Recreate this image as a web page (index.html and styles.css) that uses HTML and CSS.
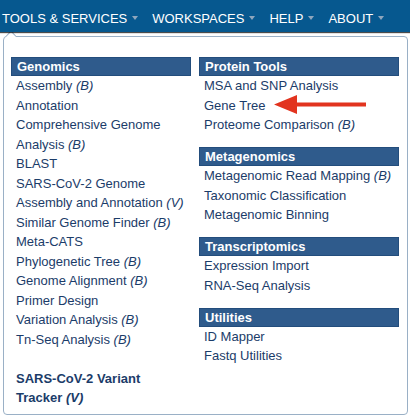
FILE: index.html
```html
<!DOCTYPE html>
<html lang="en">
<head>
    <meta charset="UTF-8">
    <meta name="viewport" content="width=device-width, initial-scale=1.0">
    <title>Tools &amp; Services</title>
    <link rel="stylesheet" href="styles.css">
</head>
<body>
    <nav class="topnav">
        <span class="nav-item">TOOLS &amp; SERVICES<i class="caret"></i></span>
        <span class="nav-item">WORKSPACES<i class="caret"></i></span>
        <span class="nav-item">HELP<i class="caret"></i></span>
        <span class="nav-item">ABOUT<i class="caret"></i></span>
    </nav>

    <div class="dropdown">
        <div class="col">
            <div class="group">
                <div class="group-title">Genomics</div>
                <ul>
                    <li>Assembly <em>(B)</em></li>
                    <li>Annotation</li>
                    <li>Comprehensive Genome</li>
                    <li>Analysis <em>(B)</em></li>
                    <li>BLAST</li>
                    <li>SARS-CoV-2 Genome</li>
                    <li>Assembly and Annotation <em>(V)</em></li>
                    <li>Similar Genome Finder <em>(B)</em></li>
                    <li>Meta-CATS</li>
                    <li>Phylogenetic Tree <em>(B)</em></li>
                    <li>Genome Alignment <em>(B)</em></li>
                    <li>Primer Design</li>
                    <li>Variation Analysis <em>(B)</em></li>
                    <li>Tn-Seq Analysis <em>(B)</em></li>
                    <li class="spacer"></li>
                    <li class="strong">SARS-CoV-2 Variant</li>
                    <li class="strong">Tracker <em>(V)</em></li>
                </ul>
            </div>
        </div>
        <div class="col">
            <div class="group">
                <div class="group-title">Protein Tools</div>
                <ul>
                    <li>MSA and SNP Analysis</li>
                    <li class="pointed">Gene Tree
                        <svg class="arrow" viewBox="0 0 96 24" width="96" height="24">
                            <polygon points="2,11.5 25,2 25,9.5 94,9.5 94,13.5 25,13.5 25,21" fill="#e2341f"/>
                        </svg>
                    </li>
                    <li>Proteome Comparison <em>(B)</em></li>
                </ul>
            </div>
            <div class="group">
                <div class="group-title">Metagenomics</div>
                <ul>
                    <li>Metagenomic Read Mapping <em>(B)</em></li>
                    <li>Taxonomic Classification</li>
                    <li>Metagenomic Binning</li>
                </ul>
            </div>
            <div class="group">
                <div class="group-title">Transcriptomics</div>
                <ul>
                    <li>Expression Import</li>
                    <li>RNA-Seq Analysis</li>
                </ul>
            </div>
            <div class="group">
                <div class="group-title">Utilities</div>
                <ul>
                    <li>ID Mapper</li>
                    <li>Fastq Utilities</li>
                </ul>
            </div>
        </div>
    </div>
</body>
</html>
```

FILE: styles.css
```css
body {
    margin: 0;
    background-color: #fff;
    font-family: "Liberation Sans", Arial, sans-serif;
    font-size: 13px;
}
.topnav {
    display: flex;
    align-items: center;
    height: 32px;
    padding-left: 2px;
    background-color: #06588f;
    box-shadow: 0 1px 1px rgba(0,0,0,0.7);
    color: #fff;
    position: relative;
    z-index: 1;
}
.nav-item {
    display: flex;
    align-items: center;
    margin-right: 14px;
    font-size: 13px;
    padding-top: 4px;
}
.caret {
    display: inline-block;
    width: 0;
    height: 0;
    margin-left: 5px;
    margin-top: -1px;
    border-left: 3.5px solid transparent;
    border-right: 3.5px solid transparent;
    border-top: 4px solid #8ea6bd;
}
.dropdown {
    position: relative;
    display: grid;
    grid-template-columns: 180px 200px;
    column-gap: 8px;
    margin: 4px 2px 0 3px;
    padding: 20px 7px 6px 7px;
    border: 1px solid #9ab0c6;
    border-radius: 4px;
    color: #1b3c69;
}
.dropdown::before,
.dropdown::after {
    content: "";
    position: absolute;
    width: 0;
    height: 0;
    border-left: 6px solid transparent;
    border-right: 6px solid transparent;
}
.dropdown::before {
    left: 1px;
    top: -7px;
    border-bottom: 7px solid #9ab0c6;
}
.dropdown::after {
    left: 1px;
    top: -5px;
    border-bottom: 6px solid #fff;
}
.group + .group {
    margin-top: 12.5px;
}
.group-title {
    height: 19px;
    box-sizing: border-box;
    padding-left: 5px;
    line-height: 17px;
    background-color: #2f5b8c;
    border: 1px solid #234d7c;
    color: #fff;
    font-weight: bold;
}
ul {
    list-style: none;
    margin: 0;
    padding: 0;
}
li {
    line-height: 19.5px;
    height: 19.5px;
    padding-left: 5px;
    white-space: nowrap;
}
li.strong {
    font-weight: bold;
}
.pointed {
    position: relative;
}
.arrow {
    position: absolute;
    left: 73px;
    top: -2.5px;
}
```
